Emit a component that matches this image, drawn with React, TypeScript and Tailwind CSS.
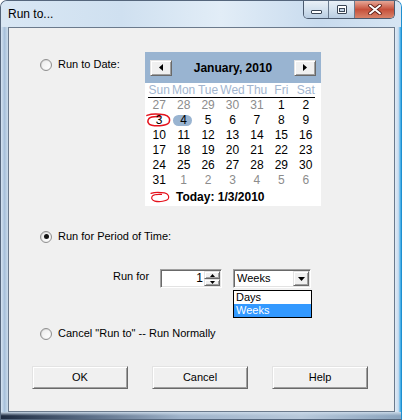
import React from "react";

const weeks = [
  [27, 28, 29, 30, 31, 1, 2],
  [3, 4, 5, 6, 7, 8, 9],
  [10, 11, 12, 13, 14, 15, 16],
  [17, 18, 19, 20, 21, 22, 23],
  [24, 25, 26, 27, 28, 29, 30],
  [31, 1, 2, 3, 4, 5, 6],
];
const dayNames = ["Sun", "Mon", "Tue", "Wed", "Thu", "Fri", "Sat"];

const raised =
  "border border-t-[#e3e3e3] border-l-[#e3e3e3] border-r-[#696969] border-b-[#696969] bg-[#f0f0f0] shadow-[inset_1px_1px_0_#fff,inset_-1px_-1px_0_#a0a0a0]";
const sunken =
  "border border-t-[#a0a0a0] border-l-[#a0a0a0] border-r-white border-b-white bg-white shadow-[inset_1px_1px_0_#696969,inset_-1px_-1px_0_#e3e3e3]";

function Radio({ checked = false }: { checked?: boolean }) {
  return (
    <span className="flex h-[12px] w-[12px] shrink-0 items-center justify-center rounded-full border border-[#8f8f8f] bg-linear-to-br from-[#cfcfcf] to-white">
      <span className="flex h-[8px] w-[8px] items-center justify-center rounded-full bg-linear-to-br from-[#ececec] to-white">
        {checked && <span className="h-[5px] w-[5px] rounded-full bg-[#151515]" />}
      </span>
    </span>
  );
}

function RedLoop() {
  return (
    <svg viewBox="0 0 26 16" className="h-full w-full" fill="none">
      <path
        d="M1 3.2 C6 1.4 13 1.6 19 2.6 C24 3.6 25.4 7 24 10.4 C22 13.8 12 14.8 6 13.4 C1.6 12.4 1.2 9 3 6.6 C5 4.6 10 4.2 15 4.6"
        stroke="#e5121c"
        strokeWidth="1.6"
        strokeLinecap="round"
      />
    </svg>
  );
}

function NavButton({ dir }: { dir: "left" | "right" }) {
  return (
    <div className={`flex h-[16px] w-[22px] items-center justify-center ${raised}`}>
      <svg viewBox="0 0 4 7" className="h-[7px] w-[4px]">
        {dir === "left" ? <path d="M4 0 L0 3.5 L4 7 Z" fill="#000" /> : <path d="M0 0 L4 3.5 L0 7 Z" fill="#000" />}
      </svg>
    </div>
  );
}

function Calendar() {
  return (
    <div className="flex h-[154px] w-[176px] flex-col bg-white">
      <div className="flex h-[31px] items-center justify-between bg-[#99b4d1] px-[5px]">
        <NavButton dir="left" />
        <span className="text-[12px] font-bold leading-[14px] text-black">January, 2010</span>
        <NavButton dir="right" />
      </div>
      <div className="ml-[2px] grid h-[14px] w-[171px] grid-cols-7 text-center text-[12px] leading-[14px] text-[#a3b6cf]">
        {dayNames.map((d) => (
          <span key={d}>{d}</span>
        ))}
      </div>
      <div className="ml-[3px] h-px w-[167px] bg-black" />
      <div className="ml-[2px] grid w-[171px] grid-cols-7 text-center text-[12px] leading-[15px]">
        {weeks.map((week, r) =>
          week.map((n, c) => {
            const other = (r === 0 && c < 5) || (r === 5 && c > 0);
            const selected = r === 1 && c === 1;
            const today = r === 1 && c === 0;
            return (
              <span key={`${r}-${c}`} className={`relative h-[15px] ${other ? "text-[#8c8c8c]" : "text-black"}`}>
                {selected && (
                  <span className="absolute left-[2px] top-[2px] h-[11px] w-[19px] rounded-full bg-[#99b4d1]" />
                )}
                {today && (
                  <span className="absolute left-[-1px] top-[-1px] h-[16px] w-[25px]">
                    <RedLoop />
                  </span>
                )}
                <span className="relative">{n}</span>
              </span>
            );
          })
        )}
      </div>
      <div className="flex h-[17px] items-center gap-[4px] pl-[3px]">
        <span className="h-[12px] w-[24px]">
          <RedLoop />
        </span>
        <span className="text-[12px] font-bold leading-[14px] text-black">Today: 1/3/2010</span>
      </div>
    </div>
  );
}

function Spinner() {
  return (
    <div className={`flex h-[19px] w-[62px] p-[1px] ${sunken}`}>
      <span className="flex-1 pr-[1px] text-right text-[12px] leading-[15px] text-black">1</span>
      <div className="flex w-[16px] flex-col">
        <div className={`flex h-[8px] items-center justify-center ${raised}`}>
          <svg viewBox="0 0 5 3" className="h-[3px] w-[5px]">
            <path d="M0 3 L2.5 0 L5 3 Z" fill="#000" />
          </svg>
        </div>
        <div className={`flex h-[7px] items-center justify-center ${raised}`}>
          <svg viewBox="0 0 5 3" className="h-[3px] w-[5px]">
            <path d="M0 0 L5 0 L2.5 3 Z" fill="#000" />
          </svg>
        </div>
      </div>
    </div>
  );
}

function Combo() {
  return (
    <div className={`relative flex h-[19px] w-[78px] p-[1px] ${sunken}`}>
      <span className="flex-1 pl-[2px] text-[11px] leading-[15px] text-black">Weeks</span>
      <div className={`flex w-[16px] items-center justify-center ${raised}`}>
        <svg viewBox="0 0 7 4" className="h-[4px] w-[7px]">
          <path d="M0 0 L7 0 L3.5 4 Z" fill="#000" />
        </svg>
      </div>
      <div className="absolute left-[-1px] top-[20px] z-10 w-[79px] border border-black bg-white text-[11px] leading-[13px]">
        <div className="h-[13px] pl-[2px] text-black">Days</div>
        <div className="h-[13px] bg-[#3399ff] pl-[2px] text-white">Weeks</div>
      </div>
    </div>
  );
}

function DialogButton({ label }: { label: string }) {
  return (
    <button className={`flex h-[23px] w-[96px] items-center justify-center text-[11px] text-black ${raised}`}>
      {label}
    </button>
  );
}

function CaptionButtons() {
  return (
    <div className="flex h-[18px] overflow-hidden rounded-b-[5px] border border-t-0 border-[#4b5a6e]">
      <div className="flex w-[25px] items-start justify-center border-r border-[#6a7a8e] bg-linear-to-b from-[#e9f0f7] via-[#d3e1ee] to-[#b9cde2] pt-[9px]">
        <span className="h-[4px] w-[11px] rounded-[1px] border border-[#3a4656] bg-white" />
      </div>
      <div className="flex w-[26px] items-start justify-center border-r border-[#6a7a8e] bg-linear-to-b from-[#e9f0f7] via-[#d3e1ee] to-[#b9cde2] pt-[4px]">
        <span className="flex h-[9px] w-[10px] rounded-[1px] border border-[#3a4656] bg-white p-[1px] pt-[2px]">
          <span className="block h-full w-full border border-[#3a4656] bg-[#c5d5e6]" />
        </span>
      </div>
      <div className="flex w-[39px] items-start justify-center bg-linear-to-b from-[#e6a797] via-[#c6503b] to-[#d8836a] pt-[3px]">
        <svg viewBox="0 0 14 11" className="h-[11px] w-[14px]">
          <path d="M2 1.5 L12 9.5 M12 1.5 L2 9.5" stroke="#5a1e16" strokeWidth="3.6" strokeLinecap="round" />
          <path d="M2 1.5 L12 9.5 M12 1.5 L2 9.5" stroke="#fff" strokeWidth="2" strokeLinecap="round" />
        </svg>
      </div>
    </div>
  );
}

export default function App() {
  return (
    <div className="flex h-[420px] w-[402px] flex-col overflow-hidden rounded-t-[7px] border border-[#55667c] border-r-[#1e8fd0] bg-[linear-gradient(180deg,#c4d9ee,#dbe8f5_30%,#c9dbee_70%,#bcd1e7)] [font-family:'Liberation_Sans',Arial,sans-serif]">
      <div className="flex h-[26px] shrink-0 items-start justify-between bg-[linear-gradient(90deg,#d9e7f4,#cfe0f0_30%,#e2edf7_55%,#c8dbee_80%,#d6e5f3)] pl-[7px] pr-[6px]">
        <span className="pt-[6px] text-[12px] leading-[14px] text-black">Run to...</span>
        <CaptionButtons />
      </div>
      <div className="flex h-[385px] shrink-0">
        <div className="w-[7px] bg-[linear-gradient(90deg,#d6e4f2,#a8c1db_50%,#cbdcec)]" />
        <div className="relative flex h-[385px] w-[387px] flex-col border border-[#6b7a8c] bg-[#f0f0f0] text-[11px] text-black">
          <div className="flex pt-[24px]">
            <div className="w-[136px]">
              <div className="mt-[6px] flex items-center gap-[6px] pl-[31px]">
                <Radio />
                <span className="leading-[13px]">Run to Date:</span>
              </div>
            </div>
            <Calendar />
          </div>
          <div className="mt-[24px] flex items-center gap-[6px] pl-[31px]">
            <Radio checked />
            <span className="leading-[13px]">Run for Period of Time:</span>
          </div>
          <div className="mt-[26px] flex items-start pl-[104px]">
            <span className="mt-[1px] w-[47px] leading-[13px]">Run for</span>
            <Spinner />
            <div className="ml-[11px]">
              <Combo />
            </div>
          </div>
          <div className="mt-[39px] flex items-center gap-[6px] pl-[31px]">
            <Radio />
            <span className="leading-[13px]">Cancel "Run to" -- Run Normally</span>
          </div>
          <div className="mt-[26px] flex gap-[24px] pl-[23px]">
            <DialogButton label="OK" />
            <DialogButton label="Cancel" />
            <DialogButton label="Help" />
          </div>
        </div>
        <div className="w-[6px] bg-[linear-gradient(90deg,#e0ebf6,#c9dcef_55%,#2fa6e6)]" />
      </div>
      <div className="flex-1 bg-[linear-gradient(180deg,#cad9e8_0%,rgba(202,217,232,0)_55%),linear-gradient(90deg,#1d2a3f,#5a6d86_22%,#9fb3ca_45%,#b8c9db_75%,#8aa3bd)]" />
    </div>
  );
}
